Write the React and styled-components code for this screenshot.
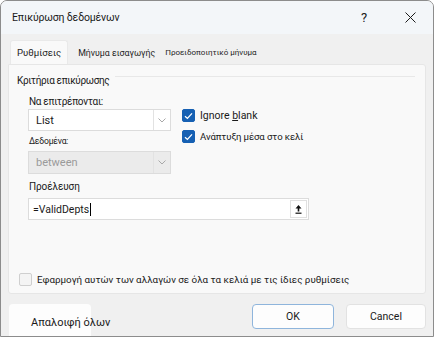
import React from "react";
import styled, { createGlobalStyle } from "styled-components";

const GlobalStyle = createGlobalStyle`
  html, body {
    margin: 0;
    padding: 0;
    background: #ffffff;
  }
  body {
    font-family: Roboto, "Noto Sans", "Liberation Sans", sans-serif;
  }
`;

const Window = styled.div`
  width: 434px;
  height: 337px;
  box-sizing: border-box;
  border: 1px solid #8c8c8c;
  border-radius: 7px 7px 0 0;
  background: #f0f0f0;
  display: flex;
  flex-direction: column;
  overflow: hidden;
  color: #1a1a1a;
`;

const TitleBar = styled.div`
  height: 33px;
  flex-shrink: 0;
  background: #f3f6f9;
  display: flex;
  align-items: center;
  padding: 0 0 0 11px;
`;

const Title = styled.div`
  flex: 1;
  font-size: 10.5px;
  letter-spacing: -0.15px;
  color: #1b1b1b;
`;

const TitleBtn = styled.div`
  width: ${(p) => p.w}px;
  height: 33px;
  display: flex;
  align-items: center;
  justify-content: center;
  font-size: 13px;
  color: #1b1b1b;
`;

const Body = styled.div`
  flex: 1;
  display: flex;
  flex-direction: column;
  padding: 6px 7px 0 7px;
`;

const TabRow = styled.div`
  display: flex;
  align-items: flex-end;
  height: 24px;
  padding-left: 2px;
`;

const Tab = styled.div`
  height: 24px;
  box-sizing: border-box;
  display: flex;
  align-items: center;
  padding: 0 ${(p) => (p.active ? 6 : 4)}px;
  margin-left: ${(p) => p.ml || 0}px;
  font-size: ${(p) => p.size}px;
  color: #1f1f1f;
  background: ${(p) => (p.active ? "#f9f9f9" : "transparent")};
  border: 1px solid ${(p) => (p.active ? "#e9e9e9" : "transparent")};
  border-bottom: none;
  border-radius: 3px 3px 0 0;
  white-space: nowrap;
`;

const Panel = styled.div`
  height: 230px;
  box-sizing: border-box;
  background: #f9f9f9;
  border: 1px solid #e6e6e6;
  border-radius: 0 3px 3px 3px;
  padding: 8px 0 0 8px;
  display: flex;
  flex-direction: column;
`;

const GroupHead = styled.div`
  display: flex;
  align-items: center;
  gap: 6px;
  font-size: 10px;
  letter-spacing: -0.35px;
  height: 14px;
  color: #1a1a1a;
  &::after {
    content: "";
    flex: 1;
    height: 1px;
    margin-top: -8px;
    background: #e8e8e8;
    margin-right: 10px;
  }
`;

const Indent = styled.div`
  padding-left: 11px;
  display: flex;
  flex-direction: column;
`;

const TopGrid = styled.div`
  display: flex;
  gap: 11px;
  margin-top: 7px;
`;

const Col = styled.div`
  display: flex;
  flex-direction: column;
  width: ${(p) => p.w || "auto"};
`;

const Label = styled.div`
  font-size: ${(p) => p.size || 10}px;
  letter-spacing: ${(p) => p.ls ?? -0.3}px;
  height: ${(p) => p.h || 15}px;
  line-height: ${(p) => p.h || 15}px;
  color: #1a1a1a;
  padding-left: 1px;
`;

const Select = styled.div`
  height: ${(p) => p.h}px;
  box-sizing: border-box;
  display: flex;
  align-items: stretch;
  border: 1px solid #dcdcdc;
  background: ${(p) => (p.disabled ? "#ebebeb" : "#ffffff")};
`;

const SelectText = styled.div`
  flex: 1;
  display: flex;
  align-items: center;
  padding-left: 7px;
  font-size: 11px;
  color: ${(p) => (p.disabled ? "#9a9a9a" : "#1a1a1a")};
`;

const Arrow = styled.div`
  width: 16px;
  border-left: 1px solid #e2e2e2;
  display: flex;
  align-items: center;
  justify-content: center;
`;

const CheckRow = styled.label`
  display: flex;
  align-items: center;
  gap: 5px;
  height: 21px;
  font-size: ${(p) => p.size || 10.5}px;
  letter-spacing: ${(p) => p.ls || 0}px;
  color: #1a1a1a;
  white-space: nowrap;
`;

const Box = styled.span`
  width: 13px;
  height: 13px;
  box-sizing: border-box;
  border-radius: 2px;
  flex-shrink: 0;
  display: flex;
  align-items: center;
  justify-content: center;
  background: ${(p) => (p.checked ? "#1660b3" : "#f4f4f4")};
  border: 1px solid ${(p) => (p.checked ? "#1660b3" : "#cfcfcf")};
`;

const SourceInput = styled.div`
  width: 281px;
  height: 22px;
  box-sizing: border-box;
  border: 1px solid #dcdcdc;
  background: #ffffff;
  display: flex;
  align-items: center;
  margin-top: 2px;
`;

const SourceText = styled.div`
  flex: 1;
  display: flex;
  align-items: center;
  padding-left: 4px;
  font-size: 10.5px;
  color: #1a1a1a;
`;

const Caret = styled.span`
  width: 1px;
  height: 13px;
  background: #000;
  margin-left: 1px;
`;

const PickBtn = styled.div`
  width: 17px;
  height: 18px;
  box-sizing: border-box;
  border: 1px solid #e0e0e0;
  margin-right: 1px;
  display: flex;
  align-items: center;
  justify-content: center;
`;

const Spacer = styled.div`
  flex: 1;
`;

const ApplyRow = styled(CheckRow)`
  padding-left: 2px;
  margin-bottom: 3px;
`;

const Footer = styled.div`
  display: flex;
  align-items: flex-start;
  margin-top: 10px;
  gap: 12px;
  padding-left: 1px;
`;

const ClearBtn = styled.div`
  width: 82px;
  height: 36px;
  flex-shrink: 0;
  background: #fdfdfd;
  border-radius: 4px;
  box-sizing: border-box;
  padding-left: 22px;
  display: flex;
  align-items: center;
  font-size: 11px;
  color: #1a1a1a;
  white-space: nowrap;
  overflow: visible;
  margin-right: auto;
`;

const Button = styled.div`
  width: ${(p) => p.w}px;
  height: 25px;
  box-sizing: border-box;
  border-radius: 4px;
  background: #fdfdfd;
  border: 1px solid ${(p) => (p.primary ? "#8fb5dc" : "#e2e2e2")};
  display: flex;
  align-items: center;
  justify-content: center;
  font-size: 10.5px;
  color: #1a1a1a;
`;

const Chevron = () => (
  <svg width="8" height="5" viewBox="0 0 8 5">
    <path d="M0.5 0.5 L4 4 L7.5 0.5" fill="none" stroke="#a8a8a8" strokeWidth="1" />
  </svg>
);

const Tick = () => (
  <svg width="9" height="8" viewBox="0 0 9 8">
    <path d="M1 4.2 L3.4 6.4 L8 1.4" fill="none" stroke="#ffffff" strokeWidth="1.3" />
  </svg>
);

const Check = ({ checked, children, ...rest }) => (
  <CheckRow {...rest}>
    <Box checked={checked}>{checked && <Tick />}</Box>
    <span>{children}</span>
  </CheckRow>
);

const App = () => {
  return (
    <>
      <GlobalStyle />
      <Window>
        <TitleBar>
          <Title>Επικύρωση δεδομένων</Title>
          <TitleBtn w={46}>?</TitleBtn>
          <TitleBtn w={46}>
            <svg width="11" height="11" viewBox="0 0 11 11">
              <path d="M0.5 0.5 L10.5 10.5 M10.5 0.5 L0.5 10.5" stroke="#1b1b1b" strokeWidth="1" />
            </svg>
          </TitleBtn>
        </TitleBar>
        <Body>
          <TabRow>
            <Tab active size={9.6}>Ρυθμίσεις</Tab>
            <Tab size={8.8} ml={5}>Μήνυμα εισαγωγής</Tab>
            <Tab size={8}>Προειδοποιητικό μήνυμα</Tab>
          </TabRow>
          <Panel>
            <GroupHead>Κριτήρια επικύρωσης</GroupHead>
            <Indent>
              <TopGrid>
                <Col w="143px">
                  <Label>Να επιτρέπονται:</Label>
                  <Select h={22}>
                    <SelectText>List</SelectText>
                    <Arrow>
                      <Chevron />
                    </Arrow>
                  </Select>
                  <Label size={8.6} ls={-0.2} h={20}>
                    Δεδομένα:
                  </Label>
                  <Select h={23} disabled>
                    <SelectText disabled>between</SelectText>
                    <Arrow>
                      <Chevron />
                    </Arrow>
                  </Select>
                </Col>
                <Col>
                  <div style={{ height: 11 }} />
                  <Check checked>
                    Ignore <u>b</u>lank
                  </Check>
                  <Check checked size={9.6} ls={-0.1}>
                    Ανάπτυξη μέσα στο κελί
                  </Check>
                </Col>
              </TopGrid>
              <Label h={18} size={10} ls={-0.1} style={{ marginTop: 4 }}>
                Προέλευση
              </Label>
              <SourceInput>
                <SourceText>
                  =ValidDepts
                  <Caret />
                </SourceText>
                <PickBtn>
                  <svg width="7" height="9" viewBox="0 0 7 9">
                    <path d="M3.5 0 L6.5 3.5 L4.3 3.5 L4.3 6.5 L2.7 6.5 L2.7 3.5 L0.5 3.5 Z" fill="#111" />
                    <rect x="0.5" y="7.6" width="6" height="1.2" fill="#111" />
                  </svg>
                </PickBtn>
              </SourceInput>
            </Indent>
            <Spacer />
            <ApplyRow size={9.8}>
              <Box />
              <span>Εφαρμογή αυτών των αλλαγών σε όλα τα κελιά με τις ίδιες ρυθμίσεις</span>
            </ApplyRow>
          </Panel>
          <Footer>
            <ClearBtn>Απαλοιφή όλων</ClearBtn>
            <Button primary w={82}>OK</Button>
            <Button w={80}>Cancel</Button>
          </Footer>
        </Body>
      </Window>
    </>
  );
};

export default App;
